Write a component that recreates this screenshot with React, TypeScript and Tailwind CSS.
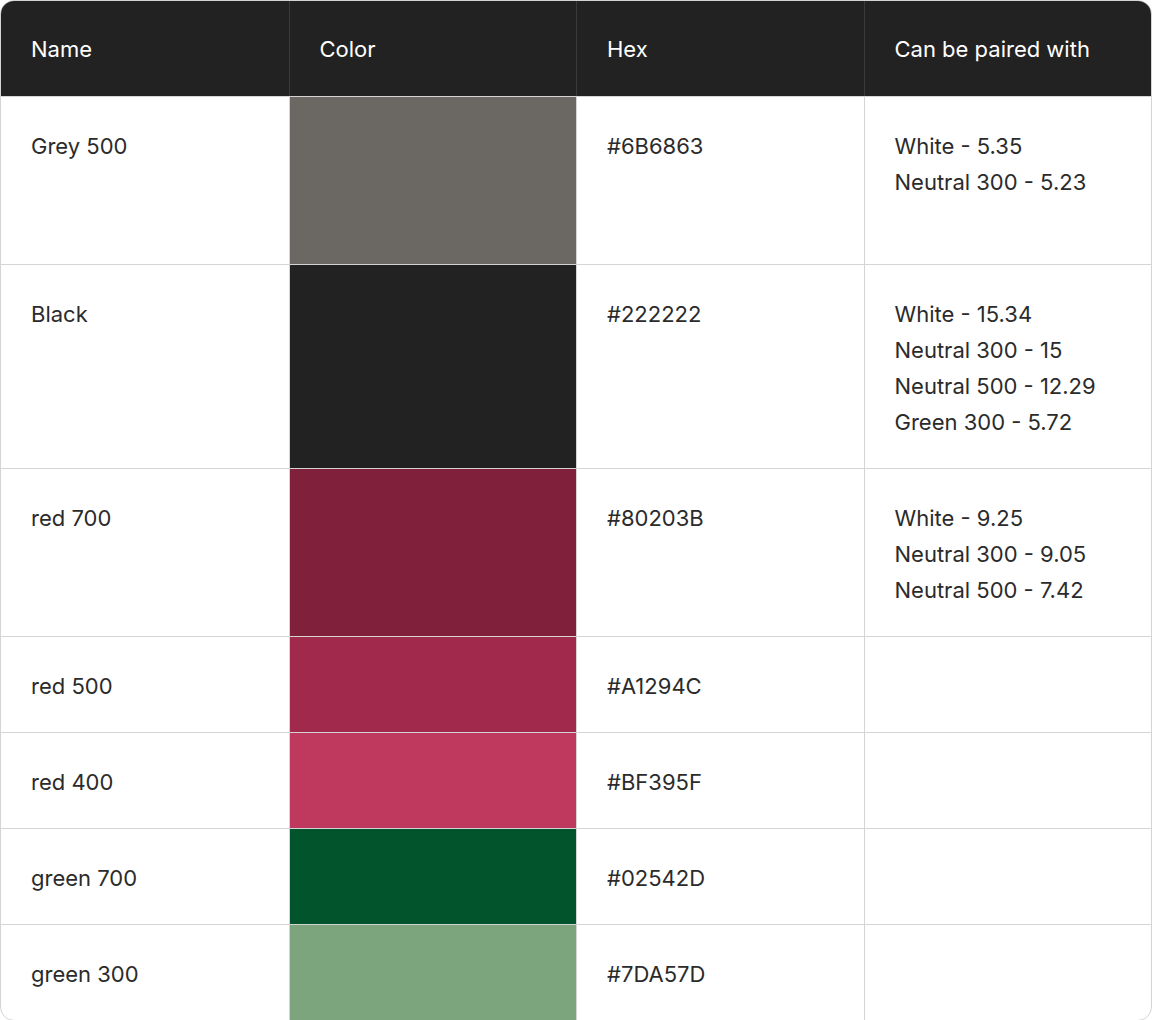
const ROWS = [
  { name: 'Grey 500', hex: '#6B6863', h: 'h-[168px]', pairs: ['White - 5.35', 'Neutral 300 - 5.23'] },
  { name: 'Black', hex: '#222222', h: 'h-[204px]', pairs: ['White - 15.34', 'Neutral 300 - 15', 'Neutral 500 - 12.29', 'Green 300 - 5.72'] },
  { name: 'red 700', hex: '#80203B', h: 'h-[168px]', pairs: ['White - 9.25', 'Neutral 300 - 9.05', 'Neutral 500 - 7.42'] },
  { name: 'red 500', hex: '#A1294C', h: 'h-[96px]', pairs: [] },
  { name: 'red 400', hex: '#BF395F', h: 'h-[96px]', pairs: [] },
  { name: 'green 700', hex: '#02542D', h: 'h-[96px]', pairs: [] },
  { name: 'green 300', hex: '#7DA57D', h: 'h-[96px]', pairs: [] },
];

const HEADERS = ['Name', 'Color', 'Hex', 'Can be paired with'];

export default function App() {
  return (
    <div className="w-[1152px] h-[1020px] bg-white" style={{ fontFamily: 'Inter, "Noto Sans", sans-serif' }}>
      <div className="border border-[#d4d4d4] rounded-[14px] overflow-hidden text-[22px] leading-[36px] text-[#2b2b2b]">
        <div className="grid grid-cols-4 h-[95px] bg-[#222222] text-white">
          {HEADERS.map((h, i) => (
            <div key={h} className={`flex items-center pl-[30px] ${i > 0 ? 'border-l border-[#3a3a3a]' : ''}`}>
              {h}
            </div>
          ))}
        </div>
        {ROWS.map((r) => (
          <div key={r.name} className={`grid grid-cols-4 border-t border-[#d4d4d4] ${r.h}`}>
            <div className="pl-[30px] pt-[31px]">{r.name}</div>
            <div className="border-l border-[#d4d4d4]" style={{ backgroundColor: r.hex }} />
            <div className="pl-[30px] pt-[31px] border-l border-[#d4d4d4]">{r.hex}</div>
            <div className="pl-[30px] pt-[31px] border-l border-[#d4d4d4]">
              {r.pairs.map((p) => (
                <div key={p}>{p}</div>
              ))}
            </div>
          </div>
        ))}
      </div>
    </div>
  );
}
